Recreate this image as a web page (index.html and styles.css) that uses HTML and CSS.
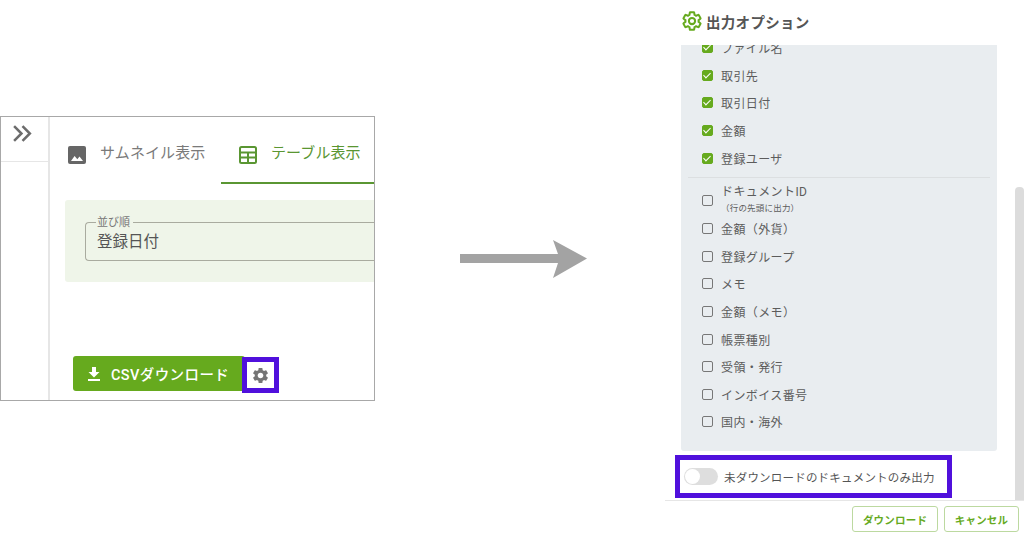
FILE: index.html
```html
<!DOCTYPE html>
<html lang="ja">
<head>
<meta charset="utf-8">
<title>出力オプション</title>
<link rel="stylesheet" href="styles.css">
</head>
<body>
<div class="page">

	<div class="app">
		<div class="side">
			<div class="side-top">
				<svg class="chev" viewBox="0 0 20 16"><path d="M2 1l7 7-7 7M10 1l7 7-7 7"/></svg>
			</div>
		</div>
		<div class="main">
			<div class="tabs">
				<div class="tab">
					<svg class="tab-icon" viewBox="0 0 18 18"><rect width="18" height="18" rx="2" fill="#666"/><path d="M3 15l3.6-5 2.7 3.2 2.2-2.7L15 15z" fill="#fff"/></svg>
					<span>サムネイル表示</span>
				</div>
				<div class="tab active">
					<svg class="tab-icon" viewBox="0 0 18 18"><rect x="1" y="1" width="16" height="16" rx="1.5" fill="none" stroke="#5a9632" stroke-width="2"/><path d="M1 6.5h16M1 11.5h16M9 6.5v10.5" fill="none" stroke="#5a9632" stroke-width="2"/></svg>
					<span>テーブル表示</span>
				</div>
			</div>
			<div class="sort">
				<div class="sort-field">
					<span class="sort-label">並び順</span>
					<span class="sort-value">登録日付</span>
				</div>
			</div>
			<div class="actions">
				<button class="csv">
					<svg class="csv-icon" viewBox="0 0 12 14"><path d="M4 0h4v5h3.5L6 10.5.5 5H4zM0 12h12v2H0z" fill="#fff"/></svg>
					CSVダウンロード
				</button>
				<div class="gear-box">
					<svg class="gear" viewBox="0 0 24 24"><path d="M19.14 12.94c.04-.3.06-.61.06-.94 0-.32-.02-.64-.07-.94l2.03-1.58c.18-.14.23-.41.12-.61l-1.92-3.32c-.12-.22-.37-.29-.59-.22l-2.39.96c-.5-.38-1.03-.7-1.62-.94l-.36-2.54c-.04-.24-.24-.41-.48-.41h-3.84c-.24 0-.43.17-.47.41l-.36 2.54c-.59.24-1.13.57-1.62.94l-2.39-.96c-.22-.08-.47 0-.59.22L2.74 8.87c-.12.21-.08.47.12.61l2.03 1.58c-.05.3-.09.63-.09.94s.02.64.07.94l-2.03 1.58c-.18.14-.23.41-.12.61l1.92 3.32c.12.22.37.29.59.22l2.39-.96c.5.38 1.03.7 1.62.94l.36 2.54c.05.24.24.41.48.41h3.84c.24 0 .44-.17.47-.41l.36-2.54c.59-.24 1.13-.56 1.62-.94l2.39.96c.22.08.47 0 .59-.22l1.92-3.32c.12-.22.07-.47-.12-.61l-2.01-1.58zM12 15.6c-1.98 0-3.6-1.62-3.6-3.6s1.62-3.6 3.6-3.6 3.6 1.62 3.6 3.6-1.62 3.6-3.6 3.6z" fill="#757575"/></svg>
				</div>
			</div>
		</div>
	</div>

	<svg class="arrow" viewBox="0 0 127 38"><path d="M0 14h98L93 0l34 18.500L93 38l5-15H0z" fill="#a3a3a3"/></svg>

	<div class="dialog">
		<div class="dialog-title">
			<svg class="title-gear" viewBox="0 0 24 24"><path d="M19.14 12.94c.04-.3.06-.61.06-.94 0-.32-.02-.64-.07-.94l2.03-1.58c.18-.14.23-.41.12-.61l-1.92-3.32c-.12-.22-.37-.29-.59-.22l-2.39.96c-.5-.38-1.03-.7-1.62-.94l-.36-2.54c-.04-.24-.24-.41-.48-.41h-3.84c-.24 0-.43.17-.47.41l-.36 2.54c-.59.24-1.13.57-1.62.94l-2.39-.96c-.22-.08-.47 0-.59.22L2.74 8.87c-.12.21-.08.47.12.61l2.03 1.58c-.05.3-.09.63-.09.94s.02.64.07.94l-2.03 1.58c-.18.14-.23.41-.12.61l1.92 3.32c.12.22.37.29.59.22l2.39-.96c.5.38 1.03.7 1.62.94l.36 2.54c.05.24.24.41.48.41h3.84c.24 0 .44-.17.47-.41l.36-2.54c.59-.24 1.13-.56 1.62-.94l2.39.96c.22.08.47 0 .59-.22l1.92-3.32c.12-.22.07-.47-.12-.61l-2.01-1.58z" fill="none" stroke="#66aa1e" stroke-width="2.200"/><circle cx="12" cy="12" r="3.400" fill="none" stroke="#66aa1e" stroke-width="2.200"/></svg>
			<span>出力オプション</span>
		</div>
		<div class="dialog-body">
			<div class="dialog-left">
				<div class="options">
					<div class="opt-list">
						<div class="opt on"><i class="box"></i>ファイル名</div>
						<div class="opt on"><i class="box"></i>取引先</div>
						<div class="opt on"><i class="box"></i>取引日付</div>
						<div class="opt on"><i class="box"></i>金額</div>
						<div class="opt on"><i class="box"></i>登録ユーザ</div>
						<div class="opt-line"></div>
						<div class="opt tall"><i class="box"></i><span class="opt-two">ドキュメントID<small>（行の先頭に出力）</small></span></div>
						<div class="opt"><i class="box"></i>金額（外貨）</div>
						<div class="opt"><i class="box"></i>登録グループ</div>
						<div class="opt"><i class="box"></i>メモ</div>
						<div class="opt"><i class="box"></i>金額（メモ）</div>
						<div class="opt"><i class="box"></i>帳票種別</div>
						<div class="opt"><i class="box"></i>受領・発行</div>
						<div class="opt"><i class="box"></i>インボイス番号</div>
						<div class="opt"><i class="box"></i>国内・海外</div>
					</div>
				</div>
				<div class="only-new">
					<div class="toggle"><div class="knob"></div></div>
					<span>未ダウンロードのドキュメントのみ出力</span>
				</div>
			</div>
			<div class="scrollbar"></div>
		</div>
		<div class="dialog-foot">
			<button class="line-btn dl">ダウンロード</button>
			<button class="line-btn cancel">キャンセル</button>
		</div>
	</div>

</div>
</body>
</html>
```

FILE: styles.css
```css
html, body{
	margin: 0;
	padding: 0;
	background: #fff;
}

.page{
	display: flex;
	align-items: flex-start;
	width: 1024px;
	height: 537px;
	overflow: hidden;
	font-family: "Roboto", "Noto Sans CJK JP", sans-serif;
	color: #555;
}

button{
	font-family: inherit;
	cursor: pointer;
}

/* left: the app window */
.app{
	display: flex;
	box-sizing: border-box;
	width: 375px;
	height: 285px;
	margin-top: 116px;
	border: 1px solid #a8a8a8;
	overflow: hidden;
	flex: none;
}

.side{
	width: 49px;
	flex: none;
	box-sizing: border-box;
	border-right: 2px solid #e6e6e6;
}

.side-top{
	display: flex;
	justify-content: center;
	padding-top: 8px;
	padding-right: 6px;
	height: 45px;
	box-sizing: border-box;
	border-bottom: 1px solid #e6e6e6;
	margin-right: -2px;
}

.chev{
	width: 21px;
	height: 17px;
	fill: none;
	stroke: #6c6c6c;
	stroke-width: 2.4;
}

.main{
	flex: 1;
	min-width: 0;
	display: flex;
	flex-direction: column;
}

.tabs{
	display: flex;
	padding-left: 18px;
	margin-top: 29px;
	height: 38px;
}

.tab{
	display: flex;
	align-items: flex-start;
	gap: 14px;
	width: 153px;
	box-sizing: border-box;
	font-size: 15px;
	line-height: 14px;
	letter-spacing: .1px;
	color: #7a7a7a;
}

.tab.active{
	color: #5a9632;
	padding-left: 18px;
	height: 38px;
	border-bottom: 2px solid #5a9632;
	width: 153px;
}

.tab-icon{
	width: 18px;
	height: 18px;
	flex: none;
}

.sort{
	margin: 16px 0 0 15px;
	height: 82px;
	padding: 22px 0 0 20px;
	box-sizing: border-box;
	background: #eff5e9;
	border-radius: 3px 0 0 3px;
}

.sort-field{
	display: flex;
	flex-direction: column;
	height: 39px;
	box-sizing: border-box;
	padding-left: 11px;
	border: 1px solid #a9ab9f;
	border-right: 0;
	border-radius: 4px 0 0 4px;
	color: #555;
}

.sort-label{
	width: fit-content;
	margin: -7px 0 0 -1px;
	padding: 0 3px 0 1px;
	background: #eff5e9;
	font-size: 11px;
	line-height: 13px;
	color: #777;
}

.sort-value{
	font-size: 15.500px;
	line-height: 20px;
	margin-top: 3px;
}

.actions{
	display: flex;
	align-items: flex-start;
	margin: 74px 0 0 23px;
}

.csv{
	display: flex;
	align-items: center;
	width: 172px;
	height: 35px;
	padding: 0 0 0 15px;
	gap: 11px;
	border: 0;
	border-radius: 3px;
	background: #66aa1e;
	color: #fff;
	font-size: 14.500px;
	font-weight: 500;
	letter-spacing: .4px;
	flex: none;
	white-space: nowrap;
}

.csv-icon{
	width: 12px;
	height: 14px;
}

.gear-box{
	display: flex;
	align-items: center;
	justify-content: center;
	box-sizing: border-box;
	width: 37px;
	height: 36px;
	margin: 1px 0 0 -3px;
	border: 5px solid #5010dc;
	background: #fff;
	flex: none;
	position: relative;
}

.gear{
	width: 19px;
	height: 19px;
}

/* middle arrow */
.arrow{
	width: 127px;
	height: 38px;
	margin: 240px 78px 0 85px;
	flex: none;
}

/* right: the dialog */
.dialog{
	width: 359px;
	height: 537px;
	flex: none;
	display: flex;
	flex-direction: column;
}

.dialog-title{
	display: flex;
	align-items: center;
	gap: 3.500px;
	height: 45px;
	box-sizing: border-box;
	padding: 0 0 3px 15.500px;
	font-size: 14.500px;
	font-weight: 700;
	letter-spacing: .3px;
	color: #555;
}

.title-gear{
	width: 22px;
	height: 22px;
}

.dialog-body{
	display: flex;
	height: 455px;
	border-bottom: 1px solid #e6e6e6;
	box-sizing: content-box;
}

.dialog-left{
	width: 332px;
	flex: none;
	padding-left: 10px;
	box-sizing: border-box;
}

.options{
	margin-left: 6px;
	width: 316px;
	height: 406px;
	background: #e9edf0;
	border-radius: 0 0 3px 3px;
	overflow: hidden;
}

.opt-list{
	margin-top: -11px;
	padding: 0 7px;
}

.opt{
	display: flex;
	align-items: center;
	height: 27.600px;
	padding-left: 14px;
	font-size: 12px;
	letter-spacing: .4px;
	color: #5c5c5c;
}

.opt.tall{
	height: 29px;
	margin-top: 8px;
}

.box{
	width: 9px;
	height: 9px;
	margin-right: 8px;
	border: 1.500px solid #777;
	border-radius: 2px;
	flex: none;
}

.opt.on .box{
	border-color: #66aa1e;
	background: #66aa1e;
	position: relative;
}

.opt.on .box::after{
	content: "";
	position: absolute;
	left: 2px;
	top: 0;
	width: 3px;
	height: 6px;
	border: solid #fff;
	border-width: 0 1.500px 1.500px 0;
	transform: rotate(45deg);
}

.opt-two{
	display: flex;
	flex-direction: column;
	line-height: 15px;
}

.opt-two small{
	font-size: 8.500px;
	line-height: 16px;
	letter-spacing: .2px;
}

.opt-line{
	height: 1px;
	margin: 5px 0 0;
	background: #dcdfe1;
}

.only-new{
	display: flex;
	align-items: center;
	gap: 6px;
	box-sizing: border-box;
	width: 277px;
	height: 43px;
	margin-top: 4px;
	padding-left: 4px;
	border: 5px solid #5010dc;
	font-size: 11.500px;
	letter-spacing: .2px;
	color: #555;
}

.toggle{
	width: 34px;
	height: 17px;
	border-radius: 9px;
	background: #dedede;
	flex: none;
	display: flex;
	align-items: center;
}

.knob{
	width: 15px;
	height: 15px;
	margin-left: 1px;
	border-radius: 50%;
	background: #fff;
}

.scrollbar{
	width: 9px;
	height: 313px;
	margin: 142px 0 0 18px;
	border-radius: 4px 4px 0 0;
	background: #dcdcdc;
	flex: none;
}

.dialog-foot{
	display: flex;
	justify-content: flex-end;
	gap: 6px;
	padding: 5px 5px 0 0;
}

.line-btn{
	height: 26px;
	padding: 0;
	background: #fff;
	border: 1px solid #bcd9a0;
	border-radius: 3px;
	color: #66aa1e;
	font-size: 10.500px;
	font-weight: 700;
	letter-spacing: .2px;
}

.line-btn.dl{
	width: 86px;
}

.line-btn.cancel{
	width: 75px;
}
```
